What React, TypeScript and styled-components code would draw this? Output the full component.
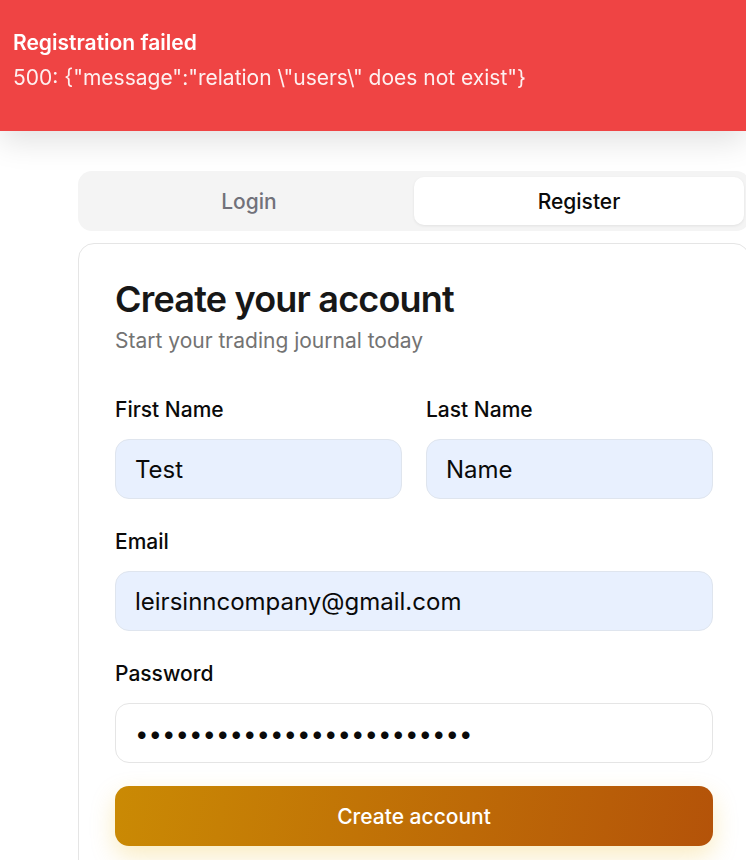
import React from "react"
import styled, { createGlobalStyle } from "styled-components"

const GlobalStyle = createGlobalStyle`
  html, body {
    margin: 0;
    padding: 0;
    background: #ffffff;
    overflow-x: hidden;
    font-family: Inter, "Noto Sans", sans-serif;
    color: #0a0a0a;
  }
  * {
    box-sizing: border-box;
  }
`

export default function App() {
  return (
    <>
      <GlobalStyle />

      {/* Error toast */}
      <Toast>
        <ToastTitle>{"Registration failed"}</ToastTitle>
        <ToastMessage>{'500: {"message":"relation \\"users\\" does not exist"}'}</ToastMessage>
      </Toast>

      <Page>
        {/* Tabs */}
        <TabList>
          <Tab>{"Login"}</Tab>
          <Tab active>{"Register"}</Tab>
        </TabList>

        {/* Register card */}
        <Card>
          <Header>
            <Title>{"Create your account"}</Title>
            <Subtitle>{"Start your trading journal today"}</Subtitle>
          </Header>

          <Form onSubmit={(e) => e.preventDefault()}>
            <Row>
              <Field>
                <Label>{"First Name"}</Label>
                <Input defaultValue="Test" filled />
              </Field>
              <Field>
                <Label>{"Last Name"}</Label>
                <Input defaultValue="Name" filled />
              </Field>
            </Row>

            <Field>
              <Label>{"Email"}</Label>
              <Input type="email" defaultValue="leirsinncompany@gmail.com" filled />
            </Field>

            <Field>
              <Label>{"Password"}</Label>
              <Input type="password" defaultValue="abcdefghijklmnopqrstuvwxy" />
            </Field>

            <SubmitButton type="submit">{"Create account"}</SubmitButton>
          </Form>
        </Card>
      </Page>
    </>
  )
}

/**
 * Styled components
 */

const Toast = styled("div")`
  position: fixed;
  top: 0;
  left: 0;
  right: 0;
  z-index: 10;
  height: 131px;
  padding: 29px 13px 0;
  background: #ef4444;
  color: #ffffff;
  box-shadow: 0 10px 30px rgba(0, 0, 0, 0.12);
`

const ToastTitle = styled("div")`
  font-size: 21px;
  line-height: 28px;
  font-weight: 600;
`

const ToastMessage = styled("div")`
  margin-top: 7px;
  font-size: 21px;
  line-height: 28px;
  opacity: 0.92;
`

const Page = styled("main")`
  width: 672px;
  margin: 171px 0 0 78px;
  display: flex;
  flex-direction: column;
  gap: 12px;
`

const TabList = styled("div")`
  display: grid;
  grid-template-columns: 1fr 1fr;
  padding: 6px;
  height: 60px;
  border-radius: 14px;
  background: #f4f4f4;
`

const Tab = styled("button")<{ active?: boolean }>`
  border: none;
  border-radius: 10px;
  font-family: inherit;
  font-size: 21px;
  font-weight: 500;
  color: ${(p) => (p.active ? "#0a0a0a" : "#71717a")};
  background: ${(p) => (p.active ? "#ffffff" : "transparent")};
  box-shadow: ${(p) => (p.active ? "0 1px 3px rgba(0, 0, 0, 0.08)" : "none")};
`

const Card = styled("section")`
  border: 1px solid #e5e5e5;
  border-radius: 16px;
  padding: 35px 36px 36px;
  background: #ffffff;
`

const Header = styled("div")`
  display: flex;
  flex-direction: column;
  gap: 8px;
  margin-bottom: 41px;
`

const Title = styled("h1")`
  margin: 0;
  font-size: 36px;
  line-height: 40px;
  font-weight: 600;
  letter-spacing: -0.8px;
  color: #171717;
`

const Subtitle = styled("p")`
  margin: 0;
  font-size: 21px;
  line-height: 28px;
  color: #737373;
`

const Form = styled("form")`
  display: flex;
  flex-direction: column;
  gap: 29px;
`

const Row = styled("div")`
  display: grid;
  grid-template-columns: 1fr 1fr;
  gap: 24px;
`

const Field = styled("div")`
  display: flex;
  flex-direction: column;
  gap: 15px;
`

const Label = styled("label")`
  font-size: 21px;
  line-height: 28px;
  font-weight: 500;
`

const Input = styled("input")<{ filled?: boolean }>`
  height: 60px;
  width: 100%;
  padding: 0 19px;
  border: 1px solid ${(p) => (p.filled ? "#dfe5ee" : "#e5e5e5")};
  border-radius: 14px;
  background: ${(p) => (p.filled ? "#e8f0fe" : "#ffffff")};
  font-family: Inter, "Noto Sans", sans-serif;
  font-size: 24px;
  color: #0a0a0a;
  outline: none;
`

const SubmitButton = styled("button")`
  margin-top: -6px;
  height: 60px;
  border: none;
  border-radius: 14px;
  background: linear-gradient(100deg, #ca8a04 0%, #b45309 100%);
  color: #ffffff;
  font-family: inherit;
  font-size: 21px;
  font-weight: 500;
  box-shadow: 0 10px 25px rgba(234, 179, 8, 0.25);
`
